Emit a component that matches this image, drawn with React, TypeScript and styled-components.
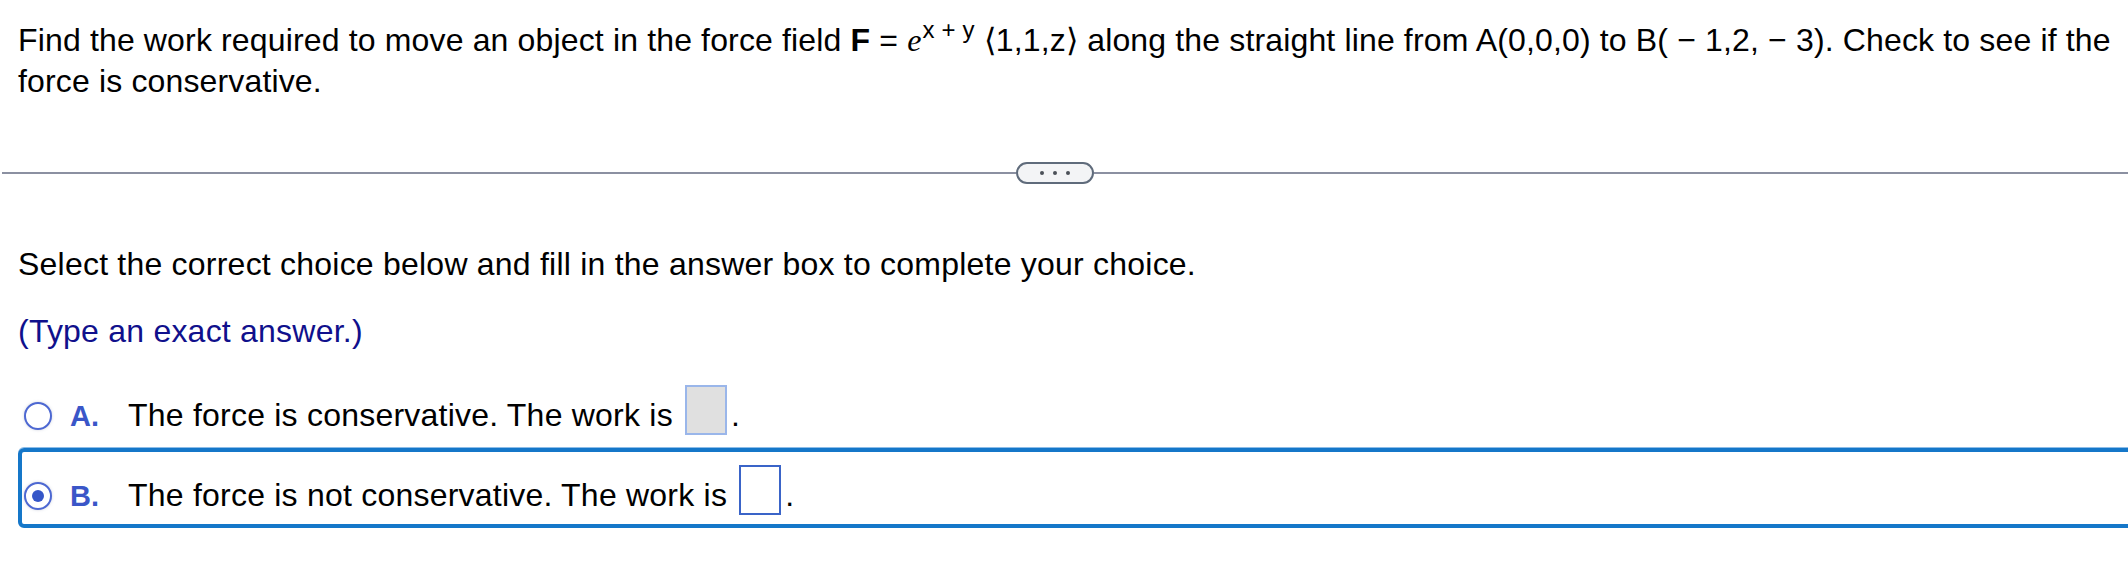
import React from "react";
import styled, { createGlobalStyle } from "styled-components";

const GlobalStyle = createGlobalStyle`
  html, body {
    margin: 0;
    padding: 0;
    background: #ffffff;
    overflow: hidden;
  }
  body {
    font-family: "Liberation Sans", Arial, sans-serif;
    color: #000;
  }
`;

const Page = styled.div`
  width: 2128px;
  height: 568px;
  overflow: hidden;
`;

const Question = styled.p`
  margin: 0;
  padding: 20px 0 0 18px;
  font-size: 32px;
  line-height: 41px;
  letter-spacing: 0.15px;
  white-space: nowrap;
`;

const Bold = styled.b`
  font-weight: 700;
`;

const MathE = styled.i`
  font-family: "Liberation Serif", "Times New Roman", serif;
  font-style: italic;
`;

const Sup = styled.sup`
  font-size: 24px;
  line-height: 0;
  vertical-align: 13px;
  margin-left: 1px;
`;

const Angle = styled.span`
  font-family: "DejaVu Sans", sans-serif;
  font-weight: 300;
`;

const Divider = styled.div`
  display: flex;
  align-items: center;
  margin: 60px 0 0 2px;
  height: 22px;
`;

const Rule = styled.div<{ $grow?: boolean }>`
  height: 2px;
  background: #8b90a1;
  flex: ${({ $grow }) => ($grow ? "1 1 auto" : "0 0 1014px")};
`;

const MoreButton = styled.button`
  flex: 0 0 auto;
  width: 78px;
  height: 22px;
  box-sizing: border-box;
  border: 2px solid #5f6b7b;
  border-radius: 11px;
  background: #f3f4f6;
  display: flex;
  align-items: center;
  justify-content: center;
  gap: 8.5px;
  padding: 0;
`;

const Dot = styled.span`
  width: 4.5px;
  height: 4.5px;
  border-radius: 50%;
  background: #4b5058;
`;

const Instructions = styled.div`
  display: flex;
  flex-direction: column;
  gap: 26px;
  margin-top: 60px;
`;

const Instruction = styled.p<{ $hint?: boolean }>`
  margin: 0;
  padding-left: 18px;
  font-size: 32px;
  line-height: 41px;
  letter-spacing: 0.22px;
  color: ${({ $hint }) => ($hint ? "#10108c" : "#000")};
`;

const Choices = styled.div`
  display: flex;
  flex-direction: column;
  margin-top: 16px;
  margin-left: 18px;
  margin-right: -20px;
`;

const Choice = styled.div<{ $selected?: boolean }>`
  border: 4px solid ${({ $selected }) => ($selected ? "#1577c9" : "transparent")};
  border-radius: 6px;
  box-shadow: ${({ $selected }) => ($selected ? "0 -1px 0 #8dbde8" : "none")};
  padding: 13px 0 7px 2px;
  font-size: 32px;
  line-height: 41px;
  letter-spacing: 0.22px;
  white-space: nowrap;
`;

const Radio = styled.span<{ $checked?: boolean }>`
  display: inline-block;
  box-sizing: border-box;
  width: 28px;
  height: 28px;
  vertical-align: -4px;
  border-radius: 50%;
  border: 2.5px solid #4d68d2;
  background: #fff;
  box-shadow: 0 0 3px rgba(120, 130, 160, 0.35);
  filter: blur(0.5px);
  position: relative;

  &::after {
    content: "";
    display: ${({ $checked }) => ($checked ? "block" : "none")};
    position: absolute;
    left: 5.5px;
    top: 5.5px;
    width: 12px;
    height: 12px;
    border-radius: 50%;
    background: #3556c8;
  }
`;

const Letter = styled.span`
  display: inline-block;
  width: 58px;
  margin-left: 18px;
  font-size: 29px;
  font-weight: 700;
  letter-spacing: 0;
  color: #3a56c8;
`;

const AnswerBox = styled.span<{ $active?: boolean }>`
  display: inline-block;
  box-sizing: border-box;
  width: 42px;
  height: 50px;
  margin-left: 12px;
  margin-right: 4px;
  vertical-align: -9px;
  background: ${({ $active }) => ($active ? "#ffffff" : "#e0e0e0")};
  border: 2px solid ${({ $active }) => ($active ? "#3a64c8" : "#9ab6ea")};
`;

export default function App() {
  return (
    <Page>
      <GlobalStyle />
      <Question>
        Find the work required to move an object in the force field <Bold>F</Bold> ={" "}
        <MathE>e</MathE>
        <Sup>x + y</Sup> <Angle>⟨</Angle>1,1,z<Angle>⟩</Angle> along the straight line from
        A(0,0,0) to B( − 1,2, − 3). Check to see if the
        <br />
        force is conservative.
      </Question>

      <Divider>
        <Rule />
        <MoreButton aria-label="more">
          <Dot />
          <Dot />
          <Dot />
        </MoreButton>
        <Rule $grow />
      </Divider>

      <Instructions>
        <Instruction>
          Select the correct choice below and fill in the answer box to complete your choice.
        </Instruction>
        <Instruction $hint>(Type an exact answer.)</Instruction>
      </Instructions>

      <Choices>
        <Choice>
          <Radio />
          <Letter>A.</Letter>
          The force is conservative. The work is
          <AnswerBox />.
        </Choice>
        <Choice $selected>
          <Radio $checked />
          <Letter>B.</Letter>
          The force is not conservative. The work is
          <AnswerBox $active />.
        </Choice>
      </Choices>
    </Page>
  );
}
